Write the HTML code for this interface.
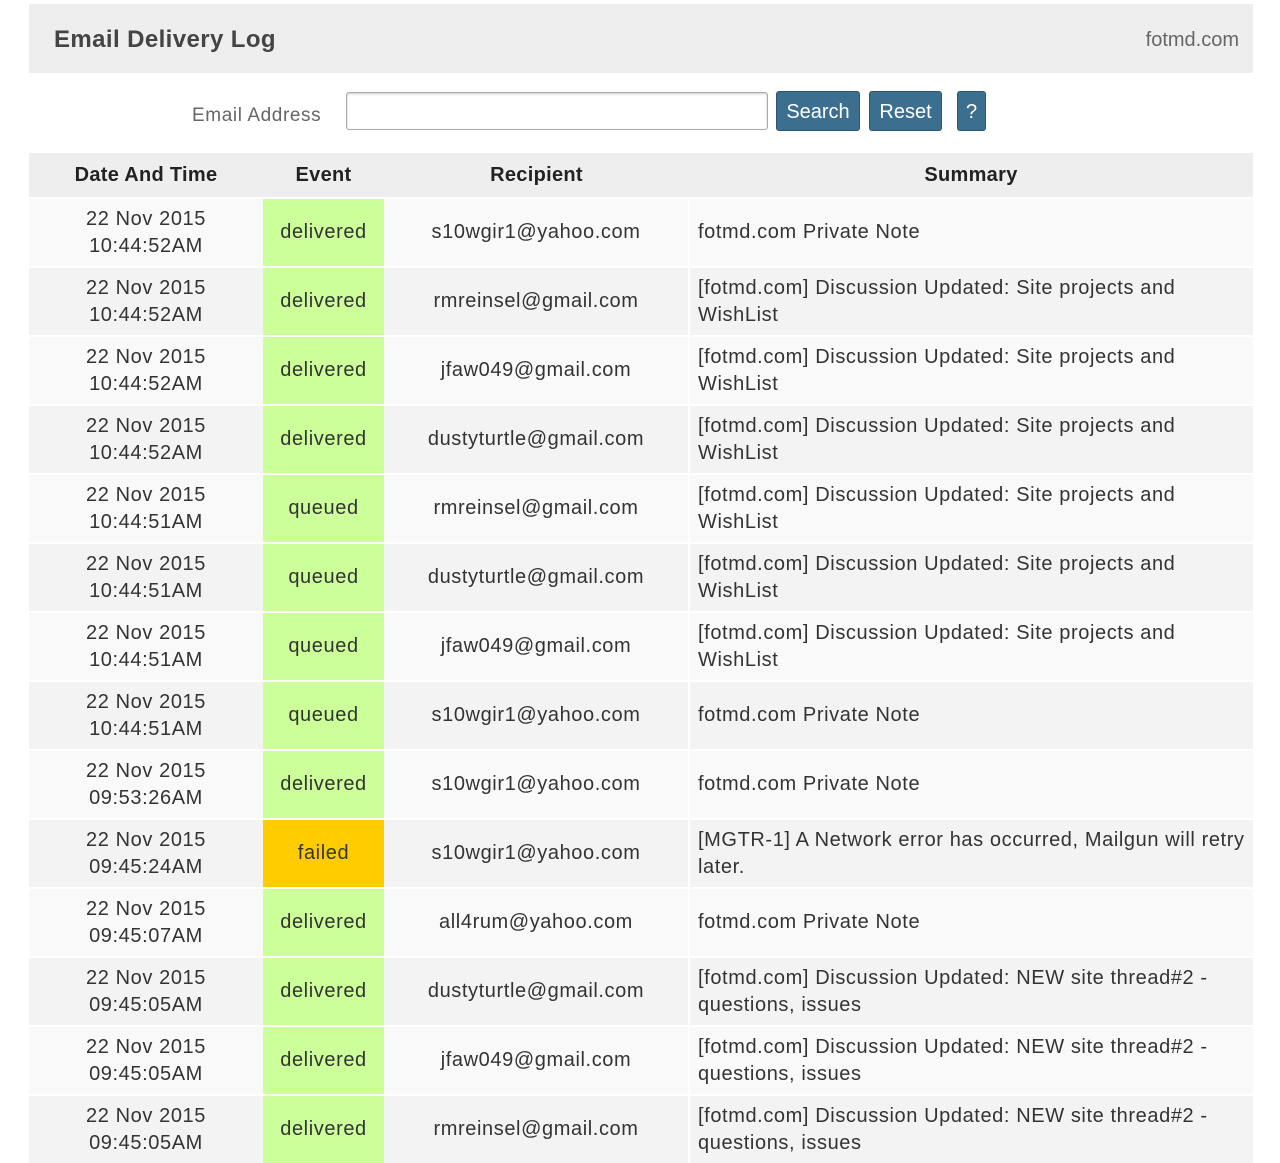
<!DOCTYPE html>
<html><head><meta charset="utf-8"><style>
body{margin:0;background:#fff;font-family:"Liberation Sans",sans-serif;color:#333;}
.wrap{position:absolute;left:29px;width:1224px;top:4px;}
.hdr{height:69px;background:#eeeeee;position:relative;}
.hdr h1{margin:0;position:absolute;left:25px;top:22px;font-size:24px;font-weight:bold;color:#444;letter-spacing:0.4px;}
.hdr .site{position:absolute;right:14px;top:25px;font-size:20px;color:#666;}
.form{position:relative;height:80px;}
.lbl{position:absolute;left:163px;top:32px;font-size:19px;color:#666;letter-spacing:0.6px;}
.inp{position:absolute;left:317px;top:19px;width:420px;height:36px;border:1px solid #aaa;border-radius:3px;box-shadow:inset 0 1px 2px #ccc;}
.btn{position:absolute;top:18px;height:40px;background:#3b6e8f;color:#fff;font-size:20px;line-height:40px;text-align:center;border-radius:3px;border:1px solid #2b5470;box-sizing:border-box;}
table{border-collapse:collapse;width:1224px;table-layout:fixed;font-size:20px;letter-spacing:0.6px;}
th{height:42px;background:#eeeeee;font-weight:bold;font-size:20px;color:#222;letter-spacing:0.3px;}
td{height:67px;text-align:center;line-height:27px;border-top:2px solid #fff;padding:0;}
td.s{text-align:left;padding-left:8px;border-left:2px solid #fff;}
tr:nth-child(odd) td{background:#f9f9f9}
tr:nth-child(even) td{background:#f3f3f3}
tr td.g{background:#ccff99}
tr td.y{background:#ffcc00}
</style></head><body><div class="wrap">
<div class="hdr"><h1>Email Delivery Log</h1><div class="site">fotmd.com</div></div>
<div class="form"><div class="lbl">Email Address</div><div class="inp"></div>
<div class="btn" style="left:747px;width:84px">Search</div>
<div class="btn" style="left:840px;width:73px">Reset</div>
<div class="btn" style="left:928px;width:29px">?</div></div>
<table><colgroup><col style="width:234px"><col style="width:121px"><col style="width:305px"><col></colgroup>
<thead><tr><th>Date And Time</th><th>Event</th><th>Recipient</th><th>Summary</th></tr></thead>
<tbody>
<tr><td>22 Nov 2015<br>10:44:52AM</td><td class="g">delivered</td><td>s10wgir1@yahoo.com</td><td class="s">fotmd.com Private Note</td></tr>
<tr><td>22 Nov 2015<br>10:44:52AM</td><td class="g">delivered</td><td>rmreinsel@gmail.com</td><td class="s">[fotmd.com] Discussion Updated: Site projects and<br>WishList</td></tr>
<tr><td>22 Nov 2015<br>10:44:52AM</td><td class="g">delivered</td><td>jfaw049@gmail.com</td><td class="s">[fotmd.com] Discussion Updated: Site projects and<br>WishList</td></tr>
<tr><td>22 Nov 2015<br>10:44:52AM</td><td class="g">delivered</td><td>dustyturtle@gmail.com</td><td class="s">[fotmd.com] Discussion Updated: Site projects and<br>WishList</td></tr>
<tr><td>22 Nov 2015<br>10:44:51AM</td><td class="g">queued</td><td>rmreinsel@gmail.com</td><td class="s">[fotmd.com] Discussion Updated: Site projects and<br>WishList</td></tr>
<tr><td>22 Nov 2015<br>10:44:51AM</td><td class="g">queued</td><td>dustyturtle@gmail.com</td><td class="s">[fotmd.com] Discussion Updated: Site projects and<br>WishList</td></tr>
<tr><td>22 Nov 2015<br>10:44:51AM</td><td class="g">queued</td><td>jfaw049@gmail.com</td><td class="s">[fotmd.com] Discussion Updated: Site projects and<br>WishList</td></tr>
<tr><td>22 Nov 2015<br>10:44:51AM</td><td class="g">queued</td><td>s10wgir1@yahoo.com</td><td class="s">fotmd.com Private Note</td></tr>
<tr><td>22 Nov 2015<br>09:53:26AM</td><td class="g">delivered</td><td>s10wgir1@yahoo.com</td><td class="s">fotmd.com Private Note</td></tr>
<tr><td>22 Nov 2015<br>09:45:24AM</td><td class="y">failed</td><td>s10wgir1@yahoo.com</td><td class="s">[MGTR-1] A Network error has occurred, Mailgun will retry<br>later.</td></tr>
<tr><td>22 Nov 2015<br>09:45:07AM</td><td class="g">delivered</td><td>all4rum@yahoo.com</td><td class="s">fotmd.com Private Note</td></tr>
<tr><td>22 Nov 2015<br>09:45:05AM</td><td class="g">delivered</td><td>dustyturtle@gmail.com</td><td class="s">[fotmd.com] Discussion Updated: NEW site thread#2 -<br>questions, issues</td></tr>
<tr><td>22 Nov 2015<br>09:45:05AM</td><td class="g">delivered</td><td>jfaw049@gmail.com</td><td class="s">[fotmd.com] Discussion Updated: NEW site thread#2 -<br>questions, issues</td></tr>
<tr><td>22 Nov 2015<br>09:45:05AM</td><td class="g">delivered</td><td>rmreinsel@gmail.com</td><td class="s">[fotmd.com] Discussion Updated: NEW site thread#2 -<br>questions, issues</td></tr>
</tbody></table></div></body></html>
